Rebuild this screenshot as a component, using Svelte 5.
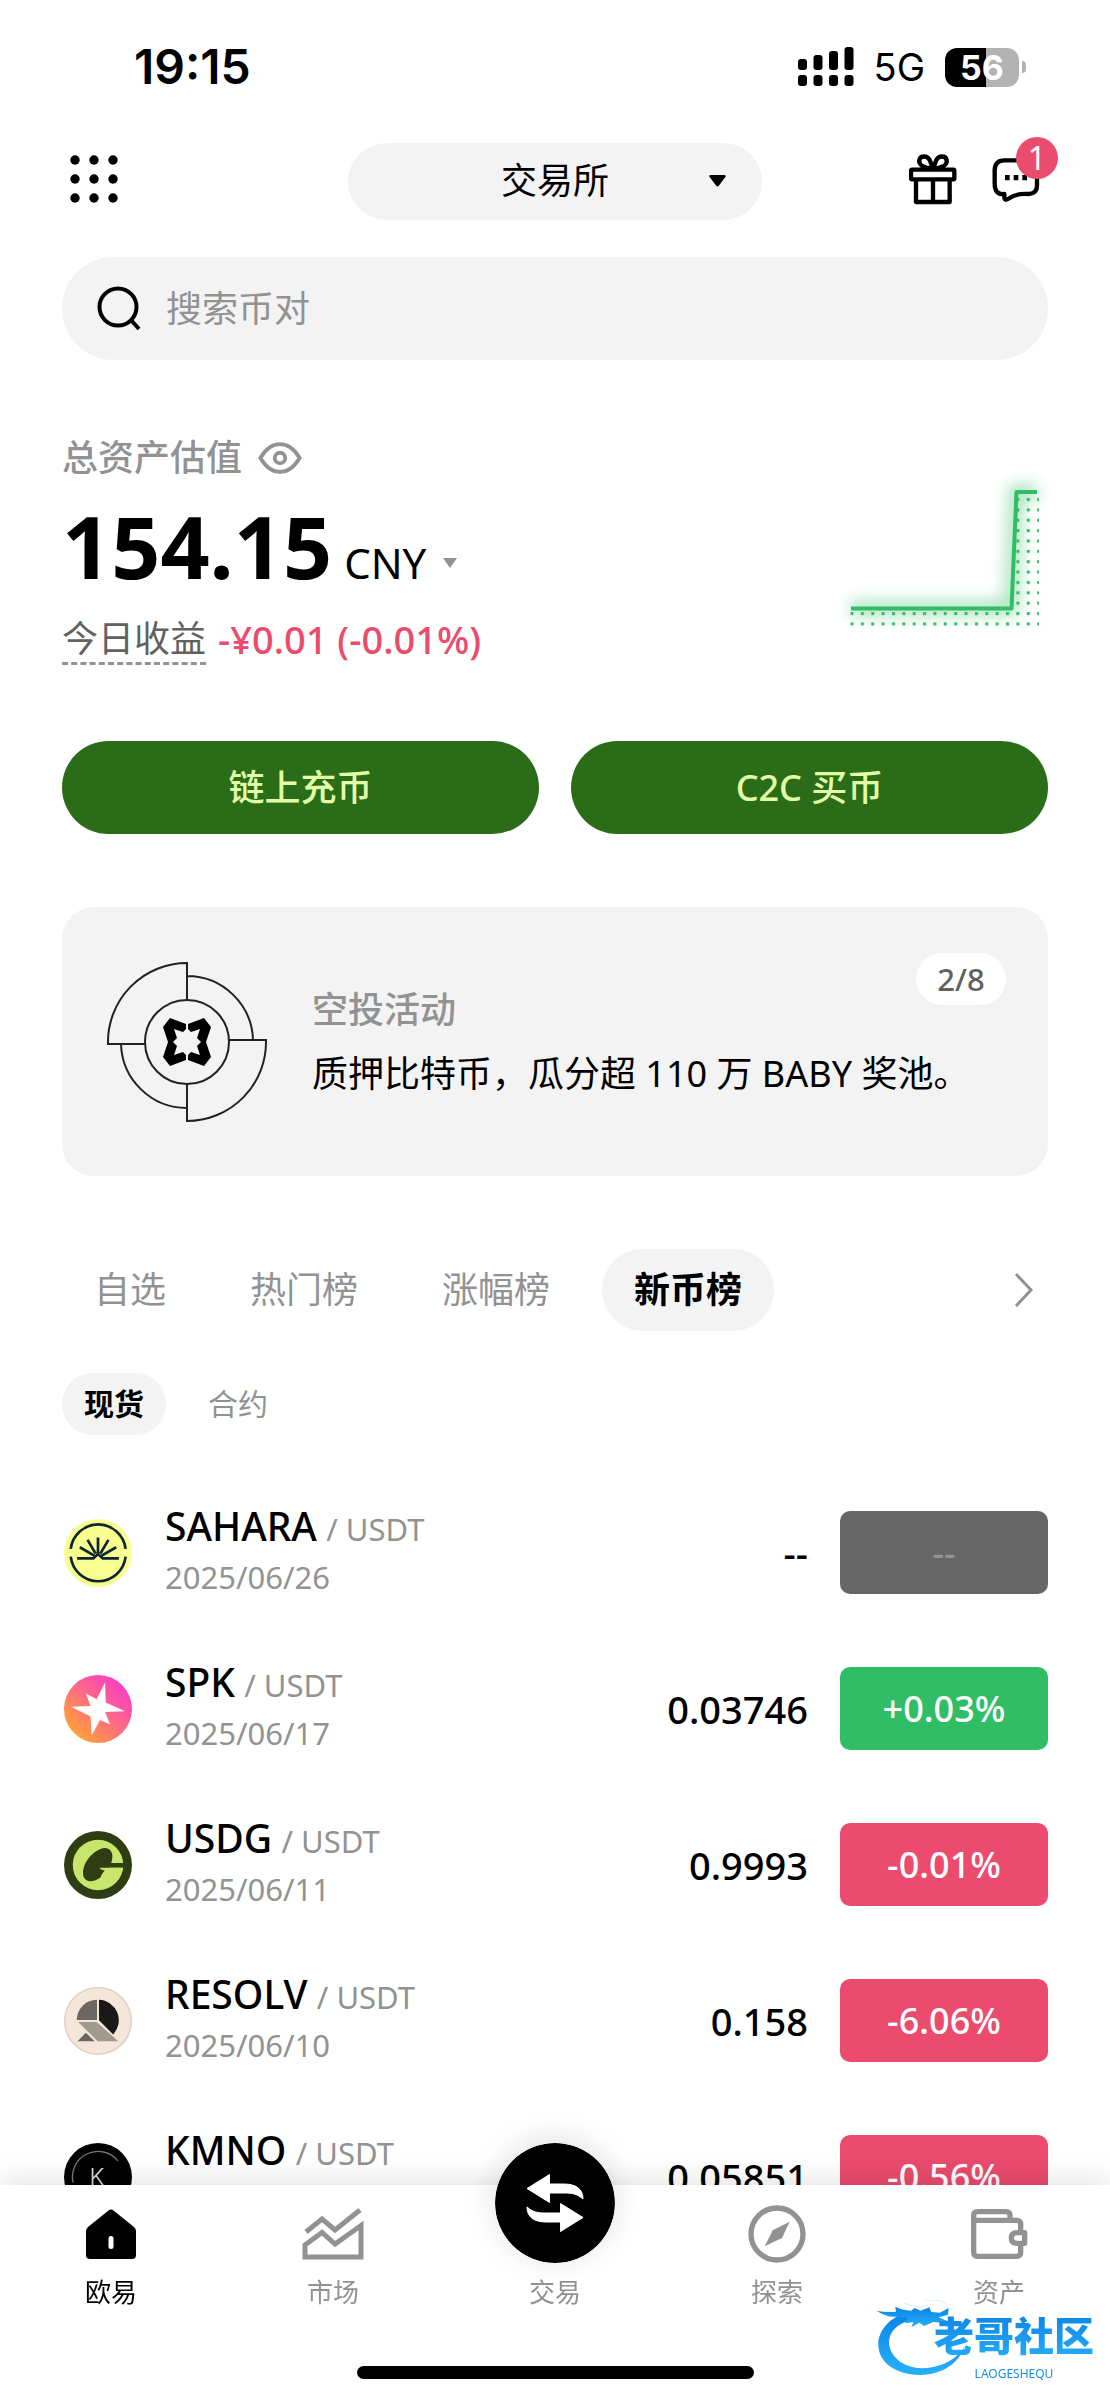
<script lang="ts">
	type Coin = {
		id: string;
		symbol: string;
		listed: string;
		price: string;
		change: string;
		trend: 'up' | 'down' | 'none';
	};

	const coins: Coin[] = [
		{ id: 'sahara', symbol: 'SAHARA', listed: '2025/06/26', price: '--', change: '--', trend: 'none' },
		{ id: 'spk', symbol: 'SPK', listed: '2025/06/17', price: '0.03746', change: '+0.03%', trend: 'up' },
		{ id: 'usdg', symbol: 'USDG', listed: '2025/06/11', price: '0.9993', change: '-0.01%', trend: 'down' },
		{ id: 'resolv', symbol: 'RESOLV', listed: '2025/06/10', price: '0.158', change: '-6.06%', trend: 'down' },
		{ id: 'kmno', symbol: 'KMNO', listed: '', price: '0.05851', change: '-0.56%', trend: 'down' }
	];

	const boards = ['自选', '热门榜', '涨幅榜', '新币榜'];
	const markets = ['现货', '合约'];
	const dots = [5, 24, 43];

	let board = $state('新币榜');
	let market = $state('现货');
	let query = $state('');
</script>

<div class="page">
	<div class="status">
		<span class="time">19:15</span>
		<div class="status-right">
			<svg width="56" height="40" viewBox="0 0 56 40" aria-hidden="true">
				<rect x="0" y="12" width="9" height="11" rx="3" />
				<rect x="15.500" y="8" width="9" height="15" rx="3" />
				<rect x="31" y="4" width="9" height="19" rx="3" />
				<rect x="46.500" y="0" width="9" height="23" rx="3" />
				<rect x="0" y="28" width="9" height="11" rx="3" />
				<rect x="15.500" y="28" width="9" height="11" rx="3" />
				<rect x="31" y="28" width="9" height="11" rx="3" />
				<rect x="46.500" y="28" width="9" height="11" rx="3" />
			</svg>
			<span class="network">5G</span>
			<span class="battery"><span class="level">56</span></span>
		</div>
	</div>

	<header class="topbar">
		<button class="icon-btn" aria-label="菜单">
			<svg width="48" height="48" viewBox="0 0 48 48">
				{#each dots as cy}
					{#each dots as cx}
						<circle {cx} {cy} r="4.700" />
					{/each}
				{/each}
			</svg>
		</button>
		<div class="venue">
			<select aria-label="账户模式">
				<option>交易所</option>
			</select>
			<svg width="17" height="12" viewBox="0 0 17 12" aria-hidden="true">
				<path d="M2 0h13q3 0 1 2.500l-6 8q-1.500 2-3 0l-6-8Q-1 0 2 0Z" />
			</svg>
		</div>
		<div class="actions">
			<button class="icon-btn" aria-label="奖励">
				<svg width="48" height="51" viewBox="450 400 144 153" class="line-icon">
					<rect x="456" y="447" width="130" height="29" rx="3" />
					<path d="M471 478v66h101v-66M522 478v66" />
					<path d="M520 443c-24 0-42-10-39-25 3-14 24-14 31 0 4 8 6 16 8 25Z" />
					<path d="M524 443c24 0 42-10 39-25-3-14-24-14-31 0-4 8-6 16-8 25Z" />
				</svg>
			</button>
			<button class="icon-btn chat" aria-label="消息">
				<svg width="48" height="45" viewBox="698 408 144 135" class="line-icon">
					<path d="M735 418h72q26 0 26 26v50q0 24-26 25-36-2-56 12-13 8-15 3-1-3-1-15-29 3-29-31v-39q0-31 29-31Z" />
					<path class="solid" d="M737 462h14v16h-14zM763 462h14v16h-14zM789 462h14v16h-14z" />
				</svg>
				<span class="unread">1</span>
			</button>
		</div>
	</header>

	<main>
		<label class="search">
			<svg width="46" height="46" viewBox="0 0 46 46" aria-hidden="true">
				<circle cx="22" cy="21" r="18.500" />
				<path d="M35 34l8 9" />
			</svg>
			<input type="text" placeholder="搜索币对" aria-label="搜索币对" bind:value={query} />
		</label>

		<section class="assets">
			<div class="summary">
				<div class="summary-label">
					<span>总资产估值</span>
					<button class="icon-btn" aria-label="隐藏资产">
						<svg width="44" height="34" viewBox="0 0 46 34" class="eye">
							<path d="M2.500 17Q11 2.500 23 2.500T43.500 17Q35 31.500 23 31.500T2.500 17Z" />
							<circle cx="23" cy="17" r="5.500" />
						</svg>
					</button>
				</div>
				<div class="amount">
					<strong>154.15</strong>
					<span class="currency">
						<select aria-label="计价货币">
							<option>CNY</option>
						</select>
						<svg width="16" height="10" viewBox="0 0 16 10" aria-hidden="true">
							<path d="M1 0h14L8 10Z" />
						</svg>
					</span>
				</div>
				<div class="pnl">
					<span class="pnl-label">今日收益</span>
					<span class="pnl-value">-¥0.01 (-0.01%)</span>
				</div>
			</div>
			<svg class="trend" width="208" height="166" viewBox="842 468 208 166" aria-hidden="true">
				<defs>
					<pattern id="dots" x="850.500" y="498" width="10.370" height="10.370" patternUnits="userSpaceOnUse">
						<rect width="3" height="3" fill="#31bd65" />
					</pattern>
					<filter id="glow" x="-20%" y="-30%" width="140%" height="160%">
						<feGaussianBlur stdDeviation="8" />
					</filter>
				</defs>
				<path class="halo" d="M851 608H1011L1016 492H1037" filter="url(#glow)" />
				<path fill="url(#dots)" d="M850 608H1012L1017 492H1039V627H850Z" />
				<path class="curve" d="M851 608.500H1011.500L1016.500 492H1037" />
			</svg>
		</section>

		<div class="cta">
			<button>链上充币</button>
			<button>C2C 买币</button>
		</div>

		<a class="banner" href="#airdrop">
			<svg width="162" height="162" viewBox="-81 -81 162 162" aria-hidden="true">
				<g class="thin">
					<circle r="42" />
					<path d="M0-42V-79A79 79 0 0 0-79 2H-42M0-66A66 66 0 0 1 66-2" />
					<path d="M0 42V79A79 79 0 0 0 79-2H42M0 66A66 66 0 0 1-66 2" />
				</g>
				<path d="M-24-15L-17-24L-1-18V-13L-4-10L-13-13L-10-4L-14 0L-10 4L-13 13L-4 10L-1 13V18L-17 24L-24 15L-19 0Z" />
				<path d="M24-15L17-24L1-18V-13L4-10L13-13L10-4L14 0L10 4L13 13L4 10L1 13V18L17 24L24 15L19 0Z" />
			</svg>
			<div class="banner-text">
				<span class="banner-kind">空投活动</span>
				<span class="banner-title">质押比特币，瓜分超 110 万 BABY 奖池。</span>
			</div>
			<span class="banner-page">2/8</span>
		</a>

		<div class="boards">
			{#each boards as name}
				<button class:active={board === name} onclick={() => (board = name)}>{name}</button>
			{/each}
			<button class="more" aria-label="更多榜单">
				<svg width="20" height="36" viewBox="0 0 20 36"><path d="M2 2L17 18L2 34" /></svg>
			</button>
		</div>

		<div class="markets">
			{#each markets as name}
				<button class:active={market === name} onclick={() => (market = name)}>{name}</button>
			{/each}
		</div>

		<ul class="coins">
			{#each coins as coin (coin.id)}
				<li>
					<svg class="logo" viewBox="0 0 202 202" aria-hidden="true">
						{#if coin.id === 'sahara'}
							<circle cx="101" cy="101" r="101" fill="#f6ff8f" />
							<g fill="none" stroke="#10252f" stroke-width="8">
								<path d="M20 89A82 82 0 0 1 183 89M20 112A82 82 0 0 0 183 112" />
								<path d="M39 117H87L101 104L115 117H163M47 84L90 109M70 62L94 103M101 55V104M132 62L108 103M155 84L112 109" />
							</g>
						{:else if coin.id === 'spk'}
							<defs>
								<linearGradient id="spk" x1="0.150" y1="0.850" x2="0.800" y2="0.150">
									<stop offset="0" stop-color="#ffa038" />
									<stop offset="0.550" stop-color="#ff6a86" />
									<stop offset="1" stop-color="#fa42bd" />
								</linearGradient>
							</defs>
							<circle cx="101" cy="101" r="101" fill="url(#spk)" />
							<path fill="#fff" d="M122 22L124 82L181 108L122 110L137 147L107 134L82 180L79 123L21 94L79 92L65 55L97 72Z" />
						{:else if coin.id === 'usdg'}
							<circle cx="101" cy="101" r="101" fill="#2f3e12" />
							<circle cx="101" cy="101" r="75" fill="#c8e66e" />
							<ellipse cx="100" cy="100" rx="57" ry="33" transform="rotate(-52 100 100)" fill="#2f3e12" />
							<path fill="#2f3e12" d="M138 95H180V109H120Z" />
							<path fill="#c8e66e" d="M106 109H176Q172 132 150 148L112 142Q104 136 121 117L110 114Z" />
						{:else if coin.id === 'resolv'}
							<circle cx="101" cy="101" r="99" fill="#f4e7d9" stroke="#dccdbf" stroke-width="4" />
							<path fill="#6b6660" d="M38 98A60 60 0 0 1 98 38V98Z" />
							<path fill="#1a1918" d="M104 38A61 61 0 0 1 146 141L104 99Z" />
							<path fill="#9f998e" d="M42 104H97L161 161H100Z" />
							<path fill="#6b6660" d="M40 161L65 136L91 161Z" />
						{:else}
							<circle cx="101" cy="101" r="101" fill="#000" />
							<path fill="none" stroke="#777" stroke-width="4" d="M27 118A76 76 0 0 1 160 53" />
							<text x="76" y="126" font-family="Inter" font-size="68" font-weight="300" fill="#ddd">K</text>
						{/if}
					</svg>
					<div class="pair">
						<div class="pair-name"><b>{coin.symbol}</b> <span>/ USDT</span></div>
						<div class="pair-date">{coin.listed}</div>
					</div>
					<span class="price">{coin.price}</span>
					<span class="change {coin.trend}">{coin.change}</span>
				</li>
			{/each}
		</ul>
	</main>

	<nav>
		<a href="#home" class="current">
			<svg width="60" height="60" viewBox="0 0 60 60">
				<path d="M27.500 6.500q2.500-2 5 0L53 23q2 2 2 4v24q0 4-4 4H9q-4 0-4-4V27q0-2 2-4Z" />
				<rect x="27.500" y="32" width="5" height="13" rx="2.500" fill="#fff" />
			</svg>
			<span>欧易</span>
		</a>
		<a href="#markets">
			<svg width="62" height="60" viewBox="0 0 62 60" class="nav-line">
				<path d="M4 28L20 15L33 26L58 6" />
				<path d="M3 53V41L20 28.500L33 40L59 21.500V53Z" />
			</svg>
			<span>市场</span>
		</a>
		<a href="#trade">
			<svg class="trade" width="120" height="120" viewBox="-60 -60 120 120">
				<circle r="60" fill="#000" />
				<g fill="#fff" stroke="#fff" stroke-linejoin="round">
					<path d="M-28-14.500L-5.500-28.500V-19H9C21-19 28-14 28-4C22-9 18-10 9-10H-5.500V-.500Z" />
					<path d="M28 14.500L5.500 28.500V19H-9C-21 19-28 14-28 4C-22 9-18 10-9 10H5.500V.500Z" />
				</g>
			</svg>
			<span>交易</span>
		</a>
		<a href="#explore">
			<svg width="60" height="60" viewBox="256 252 180 180">
				<circle cx="346" cy="342" r="78" fill="none" stroke="currentColor" stroke-width="16" />
				<path d="M384 305L361 354L309 379L333 331Z" />
			</svg>
			<span>探索</span>
		</a>
		<a href="#assets">
			<svg width="60" height="60" viewBox="925 252 180 180" class="wallet">
				<path d="M939 301H1068Q1080 301 1080 313V397Q1080 409 1068 409H951Q939 409 939 397V287Q939 275 951 275H1036Q1048 275 1048 287V301" />
				<path fill="#fff" d="M1092 338V370H1070Q1052 370 1052 354T1070 338Z" />
			</svg>
			<span>资产</span>
		</a>
		<div class="home-bar"></div>
		<div class="stamp">
			<svg width="92" height="76" viewBox="634 536 276 228" aria-hidden="true">
				<defs>
					<linearGradient id="stamp" x1="0" y1="0" x2="0" y2="1">
						<stop offset="0" stop-color="#0a84e4" />
						<stop offset="1" stop-color="#27b0fb" />
					</linearGradient>
				</defs>
				<g fill="url(#stamp)">
					<path d="M735 572C650 590 618 668 658 718C706 778 862 786 902 672C862 744 750 760 700 716C650 672 672 608 745 596Z" />
					<path d="M636 568Q665 574 694 571L692 556Q712 566 740 568L750 560L768 568L794 558L800 572L826 574L852 560L850 580L822 588L846 598L844 606L806 602L778 614L764 604L740 618L746 602L722 606L728 590L696 586Q664 588 636 568Z" />
				</g>
				<path d="M716 545Q756 562 790 552M780 537Q840 530 850 556" fill="none" stroke="#d9ecfa" stroke-width="3" />
			</svg>
			<div class="stamp-text">
				<strong>老哥社区</strong>
				<small>LAOGESHEQU</small>
			</div>
		</div>
	</nav>
</div>

<style>
	:global(body) { background: #fff; }

	.page {
		--grey: #929292;
		--soft: #f3f3f3;
		--green: #31bd65;
		--red: #eb4b6d;
		min-height: 100vh;
		box-sizing: border-box;
		padding-bottom: 178px;
		background: #fff;
		color: #000;
		font-family: 'Noto Sans', 'Noto Sans CJK SC', sans-serif;
		font-size: 36px;
		line-height: 50px;
	}

	button, select, input {
		margin: 0;
		padding: 0;
		border: none;
		background: none;
		color: inherit;
		font: inherit;
	}

	button { cursor: pointer; }
	select { appearance: none; }
	svg { display: block; flex: none; }
	a { color: inherit; text-decoration: none; }

	/* Status bar */
	.status {
		display: flex;
		justify-content: space-between;
		align-items: center;
		height: 134px;
		padding: 0 84px 0 134px;
		box-sizing: border-box;
		font-family: Inter, sans-serif;
	}

	.time { font-size: 48px; font-weight: 600; }
	.status-right { display: flex; align-items: center; gap: 20px; }
	.network { font-size: 38px; }

	.battery {
		display: flex;
		align-items: center;
		gap: 3px;
	}

	.battery::after {
		content: '';
		width: 4px;
		height: 12px;
		border-radius: 0 6px 6px 0;
		background: #b3b3b3;
	}

	.level {
		width: 74px;
		height: 39px;
		border-radius: 12px;
		background: linear-gradient(90deg, #000 56%, #b3b3b3 56%);
		color: #fff;
		font-size: 34px;
		font-weight: 700;
		line-height: 39px;
		text-align: center;
	}

	/* Top bar */
	.topbar {
		display: grid;
		grid-template-columns: 1fr 414px 1fr;
		align-items: center;
		height: 94px;
		padding: 0 70px;
	}

	.icon-btn { display: block; width: max-content; }
	.topbar .icon-btn { padding-bottom: 4px; }

	.venue {
		display: grid;
		align-items: center;
		border-radius: 39px;
		background: var(--soft);
	}

	.venue select {
		grid-area: 1 / 1;
		height: 77px;
		text-align: center;
		text-align-last: center;
	}

	.venue svg {
		grid-area: 1 / 1;
		justify-self: end;
		margin-right: 36px;
		pointer-events: none;
	}

	.actions {
		display: flex;
		justify-content: flex-end;
		align-items: center;
		gap: 35px;
	}

	.line-icon { fill: none; stroke: #000; stroke-width: 13; stroke-linejoin: round; }
	.solid { fill: #000; stroke: none; }
	.chat { position: relative; }

	.unread {
		position: absolute;
		top: -20px;
		right: -18px;
		width: 42px;
		height: 42px;
		border-radius: 50%;
		background: var(--red);
		color: #fff;
		font-size: 32px;
		line-height: 42px;
	}

	main { padding: 0 62px; }

	.search {
		display: flex;
		align-items: center;
		gap: 24px;
		height: 103px;
		margin-top: 29px;
		padding: 0 34px;
		box-sizing: border-box;
		border-radius: 52px;
		background: var(--soft);
	}

	.search svg { fill: none; stroke: #000; stroke-width: 4; }
	.search input { flex: 1; min-width: 0; outline: none; }
	.search input::placeholder { color: var(--grey); opacity: 1; }

	/* Assets */
	.assets {
		display: flex;
		justify-content: space-between;
		margin-top: 73px;
	}

	.summary-label {
		display: flex;
		align-items: center;
		gap: 16px;
		color: var(--grey);
		font-weight: 500;
	}

	.eye { fill: none; stroke: var(--grey); stroke-width: 4; }

	.amount {
		display: flex;
		align-items: baseline;
		gap: 12px;
		height: 100px;
		margin-top: 13px;
	}

	.amount strong { font-size: 86px; line-height: 100px; }

	.currency {
		display: flex;
		align-items: center;
		gap: 15px;
		font-size: 42px;
	}

	.currency svg { fill: var(--grey); }

	.pnl { display: flex; gap: 12px; margin-top: 20px; line-height: 46px; }
	.pnl-label { border-bottom: 3px dashed var(--grey); color: #616161; }
	.pnl-value { color: var(--red); font-size: 38px; font-weight: 500; }

	.trend { margin-top: 35px; margin-right: -2px; }
	.halo { fill: none; stroke: var(--green); stroke-width: 14; opacity: 0.45; }
	.curve { fill: none; stroke: var(--green); stroke-width: 4; stroke-linejoin: round; }

	.cta {
		display: grid;
		grid-template-columns: 1fr 1fr;
		gap: 32px;
		margin-top: 76px;
	}

	.cta button {
		height: 93px;
		border-radius: 47px;
		background: #2b6c18;
		color: #e2ffa8;
		font-weight: 500;
	}

	/* Banner */
	.banner {
		display: flex;
		align-items: center;
		height: 269px;
		margin-top: 73px;
		padding: 0 42px 0 44px;
		box-sizing: border-box;
		border-radius: 32px;
		background: var(--soft);
	}

	.thin { fill: none; stroke: #222; stroke-width: 2; }

	.banner-text {
		display: flex;
		flex: 1;
		flex-direction: column;
		gap: 14px;
		margin-left: 44px;
		white-space: nowrap;
	}

	.banner-kind { color: var(--grey); font-weight: 500; }

	.banner-page {
		align-self: flex-start;
		width: 90px;
		margin-top: 46px;
		margin-left: -90px;
		border-radius: 26px;
		background: #fff;
		color: #616161;
		font-size: 31px;
		font-weight: 500;
		line-height: 52px;
		text-align: center;
	}

	/* Tabs */
	.boards { display: flex; gap: 20px; margin-top: 73px; color: var(--grey); }

	.boards button {
		height: 82px;
		padding: 0 32px;
		border-radius: 41px;
	}

	.boards .more { margin-left: auto; padding: 0 14px; }
	.more svg { fill: none; stroke: var(--grey); stroke-width: 3; }

	.markets {
		display: flex;
		gap: 20px;
		margin-top: 42px;
		color: var(--grey);
		font-size: 30px;
	}

	.markets button {
		height: 62px;
		padding: 0 22px;
		border-radius: 31px;
	}

	.boards .active, .markets .active {
		background: var(--soft);
		color: #000;
		font-weight: 700;
	}

	/* Coin list */
	.coins {
		display: flex;
		flex-direction: column;
		gap: 73px;
		margin: 76px 0 0;
		padding: 0;
		list-style: none;
	}

	.coins li { display: flex; align-items: center; height: 83px; }
	.logo { width: 68px; height: 68px; margin: 0 33px 0 2px; }
	.pair { flex: 1; }
	.pair-name b { font-size: 39px; font-weight: 500; }
	.pair-name span, .pair-date { color: var(--grey); font-size: 31px; }
	.pair-date { height: 50px; line-height: 46px; }
	.price { font-size: 38px; font-weight: 500; }

	.change {
		width: 208px;
		margin-left: 32px;
		border-radius: 10px;
		background: #666;
		color: #fff;
		font-weight: 500;
		line-height: 83px;
		text-align: center;
	}

	.change.up { background: var(--green); }
	.change.down { background: var(--red); }
	.change.none { color: #929292; }

	/* Bottom navigation */
	nav {
		position: fixed;
		right: 0;
		bottom: 0;
		left: 0;
		display: grid;
		grid-template-columns: repeat(5, 1fr);
		grid-template-rows: 1fr auto;
		height: 215px;
		background: #fff;
		box-shadow: 0 0 32px rgba(0, 0, 0, 0.15);
		color: var(--grey);
		font-size: 26px;
		line-height: 38px;
	}

	nav a {
		display: flex;
		flex-direction: column;
		align-items: center;
		gap: 9px;
		padding-top: 19px;
	}

	nav a svg { fill: currentColor; }
	nav a.current { color: #000; }
	nav .nav-line { fill: none; stroke: currentColor; stroke-width: 5; }
	nav .wallet { fill: none; stroke: currentColor; stroke-width: 16; stroke-linejoin: round; }

	.trade {
		margin-top: -61px;
		margin-bottom: 1px;
		border-radius: 50%;
		box-shadow: 0 -4px 32px rgba(0, 0, 0, 0.12);
	}

	.home-bar {
		grid-column: 1 / -1;
		justify-self: center;
		width: 397px;
		height: 13px;
		margin-bottom: 21px;
		border-radius: 7px;
		background: #000;
	}

	/* Community stamp floats over the corner of the bar */
	.stamp {
		position: absolute;
		right: 16px;
		bottom: 18px;
		display: flex;
		align-items: flex-start;
		color: #1690ec;
	}

	.stamp-text {
		display: flex;
		flex-direction: column;
		align-items: center;
		margin: 6px 0 0 -34px;
	}

	.stamp strong {
		background: linear-gradient(#0a7fe0, #28b2fc);
		background-clip: text;
		color: transparent;
		font-size: 40px;
		font-weight: 900;
		line-height: 60px;
	}

	.stamp small { font-size: 12px; line-height: 16px; }
</style>
